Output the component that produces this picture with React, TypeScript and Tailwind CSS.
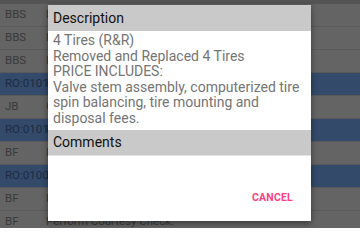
import React from 'react';

type Row = { code: string; text: string; blue?: boolean };

const rows: Row[] = [
  { code: 'BBS', text: 'Balance Tires' },
  { code: 'BBS', text: 'Brake Inspection' },
  { code: 'BBS', text: 'Battery Test' },
  { code: 'RO:01014', text: 'Repair Order', blue: true },
  { code: 'JB', text: 'Oil Change' },
  { code: 'RO:01011', text: 'Repair Order', blue: true },
  { code: 'BF', text: 'Rotate Tires' },
  { code: 'RO:01005', text: 'Repair Order', blue: true },
  { code: 'BF', text: 'Replace Wipers' },
  { code: 'BF', text: 'Perform Courtesy Check.' },
];

const App: React.FC = () => {
  return (
    <div className="relative w-[360px] h-[228px] overflow-hidden bg-[#575757]" style={{ fontFamily: 'Roboto, "Noto Sans", sans-serif' }}>
      <div className="h-[4px] bg-[#545454]" />
      {rows.map((r, i) => (
        <div
          key={i}
          className={`flex items-center h-[23px] border-b border-[#595959] text-[11.5px] ${r.blue ? 'bg-[#344a6a] text-[#1c2c44]' : 'bg-[#646464] text-[#3a3a3a]'}`}
        >
          <span className="w-[46px] pl-[5px]">{r.code}</span>
          <span>{r.text}</span>
        </div>
      ))}

      <div className="absolute left-[48px] top-[5px] w-[263px] h-[216px] bg-white shadow-[0_2px_6px_rgba(0,0,0,0.45)] flex flex-col">
        <div className="h-[26px] bg-[#c9c9c9] flex items-center px-[5px] text-[14px] text-[#111]">Description</div>
        <div className="px-[5px] pt-[2px] text-[14px] leading-[15.6px] text-[#757575] h-[99px]">
          4 Tires (R&amp;R)<br />
          Removed and Replaced 4 Tires<br />
          PRICE INCLUDES:<br />
          Valve stem assembly, computerized tire spin balancing, tire mounting and disposal fees.
        </div>
        <div className="h-[26px] bg-[#c9c9c9] flex items-center px-[5px] text-[14px] text-[#111] border-b border-[#e4e4e4]">Comments</div>
        <div className="flex-1 flex items-end justify-end pr-[18px] pb-[15px]">
          <span className="text-[10.5px] font-bold tracking-[0.2px] text-[#ff4081]">CANCEL</span>
        </div>
      </div>
    </div>
  );
};

export default App;
